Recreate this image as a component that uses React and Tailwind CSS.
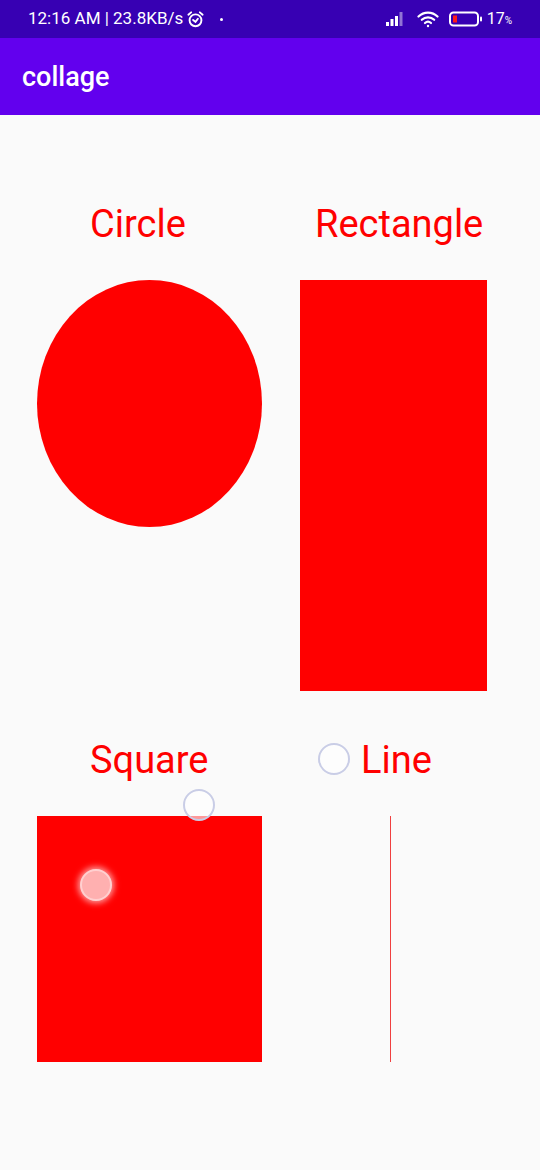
import React from "react";

const font = { fontFamily: "Roboto, 'Noto Sans', sans-serif" };

const StatusBar = () => (
  <div className="h-[38px] bg-[#3700b3] flex items-center pl-[28px] pr-[28px] text-white text-[17px]">
    <span>12:16 AM | 23.8KB/s</span>
    {/* alarm */}
    <svg width="19" height="19" viewBox="0 0 24 24" className="ml-[3px]" fill="none" stroke="white" strokeWidth="2.4" strokeLinecap="round">
      <circle cx="12" cy="13" r="7.5" />
      <path d="M9 12.5l3 2.5 3-4" />
      <path d="M3 6l3.5-3M21 6l-3.5-3" />
    </svg>
    <span className="ml-[15px] w-[3px] h-[3px] rounded-full bg-white" />
    <div className="ml-auto flex items-center">
      {/* signal */}
      <svg width="19" height="14" viewBox="0 0 19 14" className="mr-[12px]">
        <rect x="0" y="10" width="3" height="4" fill="white" />
        <rect x="4.5" y="7" width="3" height="7" fill="white" />
        <rect x="9" y="4" width="3" height="10" fill="white" />
        <rect x="13.5" y="0" width="3" height="14" fill="white" opacity="0.45" />
      </svg>
      {/* wifi */}
      <svg width="22" height="17" viewBox="0 0 22 17" className="mr-[10px]" fill="none" stroke="white" strokeWidth="2.2" strokeLinecap="round">
        <path d="M1.5 5.5a13.5 13.5 0 0 1 19 0" />
        <path d="M4.8 8.8a9 9 0 0 1 12.4 0" />
        <path d="M8 12a4.5 4.5 0 0 1 6 0" />
        <circle cx="11" cy="15" r="1.2" fill="white" stroke="none" />
      </svg>
      {/* battery */}
      <svg width="34" height="16" viewBox="0 0 34 16" className="mr-[4px]">
        <rect x="1" y="1.5" width="28" height="13" rx="3.5" fill="none" stroke="white" strokeWidth="2" />
        <rect x="4" y="4.5" width="4" height="7" fill="#ff1a1a" />
        <rect x="31" y="5.5" width="2" height="5" rx="1" fill="white" />
      </svg>
      <span className="text-[16px]">17</span>
      <span className="text-[10px] mt-[3px]">%</span>
    </div>
  </div>
);

const Touch = ({ className }) => (
  <div className={`absolute w-[32px] h-[32px] rounded-full ${className}`} />
);

export default function App() {
  return (
    <div className="min-h-[1170px] bg-[#fafafa] relative" style={font}>
      <StatusBar />
      <div className="h-[77px] bg-[#6200ee] flex items-center px-[22px]">
        <h1 className="text-white text-[27px] font-medium leading-none mt-[1px]">collage</h1>
      </div>

      <div className="pt-[90px] flex">
        <div className="ml-[37px] w-[225px] flex flex-col">
          <div className="text-[#ff0000] text-[38px] leading-none h-[38px] pl-[53px]">Circle</div>
          <div className="mt-[37px] w-[225px] h-[247px] rounded-[50%] bg-[#ff0000]" />
        </div>
        <div className="ml-[38px] w-[187px] flex flex-col">
          <div className="text-[#ff0000] text-[38px] leading-none h-[38px] pl-[15px]">Rectangle</div>
          <div className="mt-[37px] w-[187px] h-[411px] bg-[#ff0000]" />
        </div>
      </div>

      <div className="mt-[50px] flex">
        <div className="ml-[37px] w-[225px] flex flex-col">
          <div className="text-[#ff0000] text-[38px] leading-none h-[38px] pl-[53px]">Square</div>
          <div className="mt-[37px] w-[225px] h-[246px] bg-[#ff0000]" />
        </div>
        <div className="ml-[38px] w-[187px] flex flex-col">
          <div className="text-[#ff0000] text-[38px] leading-none h-[38px] pl-[61px]">Line</div>
          <div className="mt-[37px] ml-[90px] w-px h-[246px] bg-[#f04040]" />
        </div>
      </div>

      {/* touch indicators */}
      <Touch className="left-[318px] top-[743px] bg-white/60 border-2 border-[#c9cde6]" />
      <Touch className="left-[183px] top-[789px] bg-white/60 border-2 border-[#c9cde6]" />
      <Touch className="left-[80px] top-[869px] bg-[#ffb0b0] border-2 border-[#ffd0d0] shadow-[0_0_6px_2px_rgba(255,200,200,0.8)]" />
    </div>
  );
}
